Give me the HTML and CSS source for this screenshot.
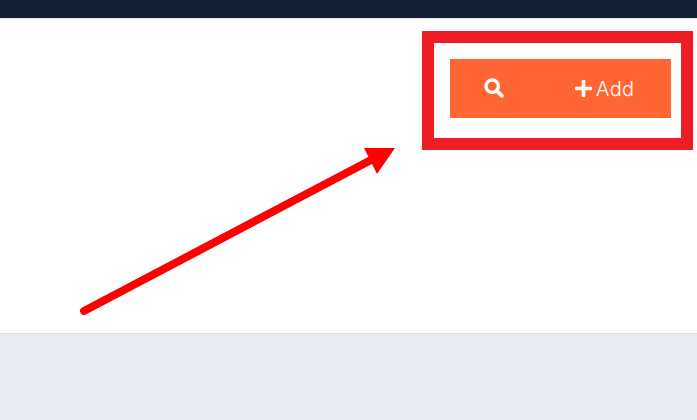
FILE: index.html
```html
<!DOCTYPE html>
<html lang="en">
<head>
<meta charset="utf-8">
<title>Add</title>
<link rel="stylesheet" href="styles.css">
</head>
<body>
<div class="topbar"></div>
<header class="panel">
  <div class="actions">
    <div class="toolbar">
      <button class="tool tool-search" type="button" aria-label="Search">
        <svg class="icon-search" viewBox="0 0 19 19" width="20" height="20" aria-hidden="true">
          <circle cx="7.8" cy="7.8" r="5.9" fill="none" stroke="#fff" stroke-width="3.2"/>
          <path d="M12.2 12.2 17 17" fill="none" stroke="#fff" stroke-width="3.8" stroke-linecap="round"/>
        </svg>
      </button>
      <button class="tool tool-add" type="button">
        <svg class="icon-plus" viewBox="0 0 17 17" width="17" height="17" aria-hidden="true">
          <path d="M8.5 1.5v14M1.5 8.5h14" fill="none" stroke="#fff" stroke-width="3.6" stroke-linecap="round"/>
        </svg>
        <span>Add</span>
      </button>
    </div>
  </div>
  <svg class="arrow" viewBox="0 0 697 420" width="697" height="420" aria-hidden="true">
    <path d="M84 311 371 160" fill="none" stroke="#fe0000" stroke-width="8" stroke-linecap="round"/>
    <path d="M364 148H395L377 174Z" fill="#fe0000"/>
  </svg>
</header>
</body>
</html>
```

FILE: styles.css
```css
* {
  box-sizing: border-box;
}

html,
body {
  margin: 0;
  height: 100%;
}

body {
  background: #e9eaef;
  font-family: "Inter", "Liberation Sans", sans-serif;
  overflow: hidden;
}

.topbar {
  height: 19px;
  background: #151f34;
  border-bottom: 1px solid #e6e7ea;
}

.panel {
  position: relative;
  display: flex;
  justify-content: flex-end;
  height: 315px;
  padding: 12px 4px 0 0;
  background: #fff;
  border-bottom: 1px solid #dfe0e2;
}

.actions {
  width: 271px;
  height: 119px;
  padding: 16px 10px 0 16px;
  border: 12px solid #ee1c25;
}

.toolbar {
  display: flex;
  height: 59px;
  background: #ff6633;
}

.tool {
  display: flex;
  align-items: center;
  height: 100%;
  padding: 0;
  border: 0;
  background: transparent;
  color: #fff;
  font: inherit;
}

.tool-search {
  width: 125px;
  padding: 0 0 1px 34px;
}

.tool-add {
  gap: 4px;
  font-size: 20px;
  font-weight: 300;
  letter-spacing: 0.3px;
}

.arrow {
  position: absolute;
  top: -19px;
  left: 0;
  pointer-events: none;
}
```
